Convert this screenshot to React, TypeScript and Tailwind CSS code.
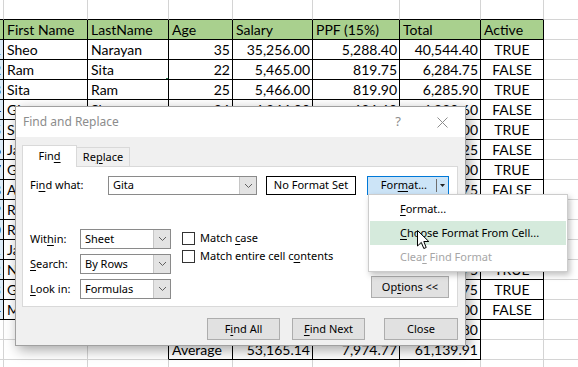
import React from "react";

type Row = [string, string, string, string, string, string, string, string];

// no, first, last, age, salary, ppf, total, active
const people: Row[] = [
  ["1", "Sheo", "Narayan", "35", "35,256.00", "5,288.40", "40,544.40", "TRUE"],
  ["2", "Ram", "Sita", "22", "5,465.00", "819.75", "6,284.75", "FALSE"],
  ["3", "Sita", "Ram", "25", "5,466.00", "819.90", "6,285.90", "TRUE"],
  ["4", "Gita", "Sharma", "26", "4,244.00", "636.60", "4,880.60", "FALSE"],
  ["5", "Sohan", "Verma", "30", "6,200.00", "930.00", "7,130.00", "TRUE"],
  ["6", "Jatin", "Gupta", "27", "7,455.00", "1,118.25", "8,573.25", "FALSE"],
  ["7", "Gopal", "Das", "32", "8,000.00", "1,200.00", "9,200.00", "TRUE"],
  ["8", "Anil", "Kumar", "29", "6,125.00", "918.75", "7,043.75", "FALSE"],
  ["9", "Rahul", "Singh", "31", "9,800.00", "1,470.00", "11,270.00", "TRUE"],
  ["10", "Ravi", "Mehta", "28", "7,200.00", "1,080.00", "8,280.00", "FALSE"],
  ["11", "Jaya", "Rao", "24", "6,600.00", "990.00", "7,590.00", "TRUE"],
  ["12", "Neha", "Jain", "26", "5,465.00", "819.75", "6,284.75", "TRUE"],
  ["13", "Gita", "Ram", "33", "9,125.00", "1,368.75", "10,493.75", "TRUE"],
  ["14", "Mohan", "Lal", "45", "62,000.00", "9,300.00", "71,300.00", "FALSE"],
];

const header: Row = ["", "First Name", "LastName", "Age", "Salary", "PPF (15%)", "Total", "Active"];

const colW = ["w-[4px]", "w-[84px]", "w-[81px]", "w-[64px]", "w-[80px]", "w-[87px]", "w-[81px]", "w-[63px]", "flex-1"];

const ROWS = 19;

function inTable(r: number, c: number) {
  if (r >= 1 && r <= 15 && c <= 7) return true;
  if ((r === 16 || r === 17) && c >= 3 && c <= 6) return true;
  return false;
}

function cellText(r: number, c: number): string {
  if (c > 7) return "";
  if (r === 1) return header[c];
  if (r >= 2 && r <= 15) return people[r - 2][c];
  if (r === 16) return ["", "", "", "Sum", "744,312.00", "111,646.80", "855,958.80", ""][c];
  if (r === 17) return ["", "", "", "Average", "53,165.14", "7,974.77", "61,139.91", ""][c];
  return "";
}

function Cell({r, c}: {r: number; c: number}) {
  const right = c === 8 ? "" : inTable(r, c) || inTable(r, c + 1) ? "border-r border-r-black" : "border-r border-r-[#d4d4d4]";
  const bottom = inTable(r, c) || inTable(r + 1, c) ? "border-b border-b-black" : "border-b border-b-[#d4d4d4]";
  let fill = "";
  if (r === 1 && c <= 7) fill = "bg-[#a9d08e]";
  else if (r >= 2 && r <= 15 && c === 0) fill = "bg-[#ddebf7]";
  const numeric = r >= 2 && c >= 3 && c <= 6 && !(r === 17 && c === 3) && !(r === 16 && c === 3);
  const align = c === 0 || numeric ? "justify-end pr-[2px]" : r >= 2 && c === 7 ? "justify-center" : "justify-start pl-[3px]";
  const selected = r === 3 && c === 2;
  return (
    <div className={`${colW[c]} shrink-0 h-full relative flex items-center overflow-hidden whitespace-nowrap ${right} ${bottom} ${fill} ${align}`}>
      <span className="leading-none pt-[1px]">{cellText(r, c)}</span>
      {selected && (
        <>
          <div className="absolute left-[-2px] top-[-2px] w-[84px] h-[23px] border-2 border-[#217346]"/>
          <div className="absolute left-[77px] top-[17px] w-[6px] h-[6px] bg-[#217346] border border-white"/>
        </>
      )}
    </div>
  );
}

function Sheet() {
  return (
    <div className="flex flex-col font-['Lato',sans-serif] text-[14px] text-black">
      {Array.from({length: ROWS}).map((_, r) => (
        <div key={r} className="flex h-[20px]">
          {colW.map((_, c) => (
            <Cell key={c} r={r} c={c}/>
          ))}
        </div>
      ))}
    </div>
  );
}

const Chevron = () => (
  <svg width="9" height="6" viewBox="0 0 9 6">
    <path d="M1 1 L4.5 4.5 L8 1" fill="none" stroke="#606060" strokeWidth="1"/>
  </svg>
);

function Combo({value, width}: {value: string; width: string}) {
  return (
    <div className={`${width} h-full flex items-stretch bg-white border border-[#8a8a8a]`}>
      <span className="flex-1 flex items-center pl-[4px]">{value}</span>
      <div className="w-[17px] bg-[#e3e3e3] border-l border-[#c6c6c6] flex items-center justify-center">
        <Chevron/>
      </div>
    </div>
  );
}

function Check({children}: {children: React.ReactNode}) {
  return (
    <div className="flex items-center gap-[5px] h-[18px]">
      <div className="w-[13px] h-[13px] bg-white border border-[#333333]"/>
      <span>{children}</span>
    </div>
  );
}

const Btn = ({children, w}: {children: React.ReactNode; w: string}) => (
  <div className={`${w} h-[22px] flex items-center justify-center bg-[#e1e1e1] border border-[#adadad]`}>
    {children}
  </div>
);

function FindDialog() {
  return (
    <div className="absolute left-[15px] top-[106px] w-[451px] h-[240px] flex flex-col bg-[#f0f0f0] border border-[#a0a0a0] shadow-[3px_4px_12px_rgba(0,0,0,0.35)] font-['Noto_Sans',sans-serif] text-[11px] text-black">
      {/* title bar */}
      <div className="h-[30px] bg-white flex items-center pl-[7px] text-[12px] text-[#8c8c8c]">
        <span>Find and Replace</span>
        <span className="ml-auto mr-[36px] text-[13px]">?</span>
        <svg width="11" height="11" viewBox="0 0 11 11" className="mr-[17px]">
          <path d="M0.5 0.5 L10.5 10.5 M10.5 0.5 L0.5 10.5" stroke="#8c8c8c" strokeWidth="1"/>
        </svg>
      </div>

      <div className="px-[6px] pt-[7px]">
        {/* tabs */}
        <div className="flex items-end h-[22px]">
          <div className="w-[55px] h-[22px] -mb-px z-10 bg-white border border-[#d9d9d9] border-b-0 flex items-center justify-center">
            <span>Fin<u className="underline-offset-2">d</u></span>
          </div>
          <div className="w-[53px] h-[19px] border border-[#d9d9d9] border-b-0 border-l-0 flex items-center justify-center">
            <span>Re<u className="underline-offset-2">p</u>lace</span>
          </div>
        </div>

        {/* tab panel */}
        <div className="w-[436px] h-[141px] bg-white border border-[#d9d9d9] pl-[7px] pt-[9px]">
          <div className="flex items-center h-[19px]">
            <span className="w-[78px]">Fi<u className="underline-offset-2">n</u>d what:</span>
            <Combo value="Gita" width="w-[149px]"/>
            <div className="ml-[9px] w-[90px] h-full border border-black flex items-center justify-center">No Format Set</div>
            <div className="ml-[11px] w-[82px] h-full bg-[#cce4f7] border border-[#0078d7] flex items-center justify-end">
              <span>For<u className="underline-offset-2">m</u>at...</span>
              <div className="ml-[9px] w-px h-[13px] bg-[#6e6e6e]"/>
              <svg width="5" height="3" viewBox="0 0 5 3" className="mx-[3px]">
                <path d="M0 0 L5 0 L2.5 3 Z" fill="#222"/>
              </svg>
            </div>
          </div>

          <div className="flex mt-[34px]">
            <div className="grid grid-cols-[50px_91px] gap-y-[5px] auto-rows-[20px] items-center">
              <span>Wit<u className="underline-offset-2">h</u>in:</span>
              <Combo value="Sheet" width="w-[91px]"/>
              <span><u className="underline-offset-2">S</u>earch:</span>
              <Combo value="By Rows" width="w-[91px]"/>
              <span><u className="underline-offset-2">L</u>ook in:</span>
              <Combo value="Formulas" width="w-[91px]"/>
            </div>
            <div className="ml-[11px] flex flex-col">
              <Check>Match <u className="underline-offset-2">c</u>ase</Check>
              <Check>Match entire cell c<u className="underline-offset-2">o</u>ntents</Check>
            </div>
            <div className="ml-auto mr-[8px] self-end mb-[1px]">
              <Btn w="w-[78px]">
                <span>Op<u className="underline-offset-2">t</u>ions &lt;&lt;</span>
              </Btn>
            </div>
          </div>
        </div>

        {/* bottom buttons */}
        <div className="flex mt-[11px] pl-[185px]">
          <Btn w="w-[73px]"><span>F<u className="underline-offset-2">i</u>nd All</span></Btn>
          <div className="ml-[12px]">
            <Btn w="w-[73px]"><span><u className="underline-offset-2">F</u>ind Next</span></Btn>
          </div>
          <div className="ml-[19px]">
            <Btn w="w-[74px]"><span>Close</span></Btn>
          </div>
        </div>
      </div>
    </div>
  );
}

function FormatMenu() {
  return (
    <div className="absolute left-[368px] top-[194px] w-[200px] py-[2px] bg-white border border-[#cccccc] shadow-[2px_3px_6px_rgba(0,0,0,0.25)] font-['Noto_Sans',sans-serif] text-[11px]">
      <div className="h-[24px] flex items-center pl-[31px] text-black">
        <span><u className="underline-offset-2">F</u>ormat...</span>
      </div>
      <div className="h-[24px] mx-px flex items-center pl-[30px] bg-[#d5eadc] text-black">
        <span><u className="underline-offset-2">C</u>hoose Format From Cell...</span>
      </div>
      <div className="h-[24px] flex items-center pl-[31px] text-[#a6a6a6]">
        <span>Clea<u className="underline-offset-2">r</u> Find Format</span>
      </div>
    </div>
  );
}

const Pointer = () => (
  <svg width="13" height="20" viewBox="0 0 13 20" className="absolute left-[417px] top-[230px]">
    <path d="M0.5 0.5 L0.5 16 L4.3 12.4 L6.8 18.5 L9.2 17.5 L6.8 11.5 L11.8 11.5 Z" fill="white" stroke="black" strokeWidth="1"/>
  </svg>
);

export default function App() {
  return (
    <div className="relative w-[578px] h-[367px] overflow-hidden bg-white">
      <Sheet/>
      <FindDialog/>
      <FormatMenu/>
      <Pointer/>
    </div>
  );
}
